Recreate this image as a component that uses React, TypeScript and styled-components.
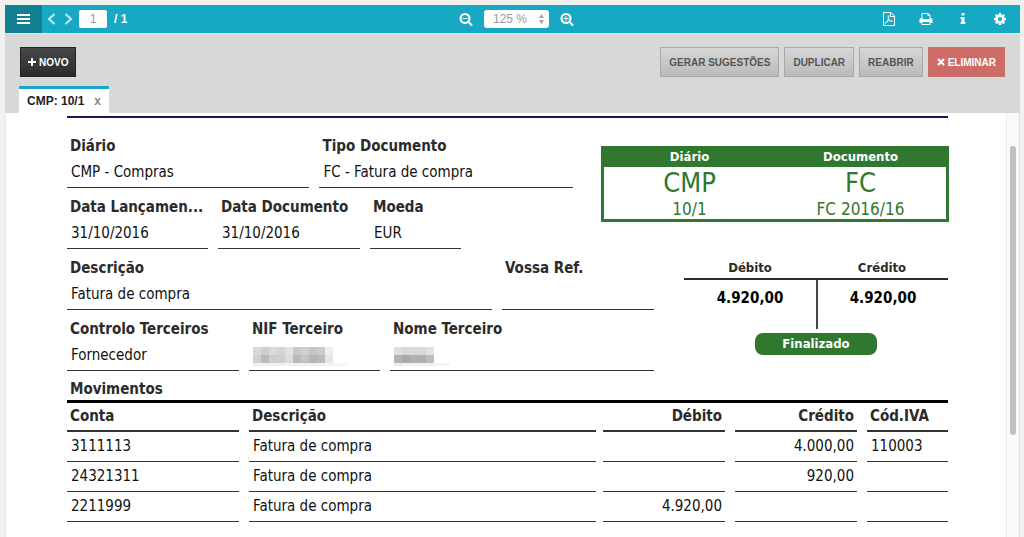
import React from "react";
import styled, { createGlobalStyle, css } from "styled-components";

const TEAL = "#17a9c4";
const GREEN = "#307730";
const UI = `"Liberation Sans", Arial, sans-serif`;
const DOC = `"DejaVu Sans Condensed", "DejaVu Sans", sans-serif`;

const Global = createGlobalStyle`
  *, *::before, *::after { box-sizing: border-box; }
  body { margin: 0; background: #f1f1ee; font-family: ${UI}; }
  button, input, select { font-family: inherit; }
  dl, dd, dt, h2, p { margin: 0; }
`;

const Shell = styled.div`
  display: flex;
  flex-direction: column;
  min-height: 100vh;
  padding: 5px 4px 0 5px;
`;

/* ---------- toolbar ---------- */

const Toolbar = styled.header`
  display: flex;
  align-items: stretch;
  height: 28px;
  background: ${TEAL};
  color: #fff;
`;

const ToolSide = styled.div<{ $end?: boolean }>`
  flex: 1;
  display: flex;
  align-items: center;
  justify-content: ${(p) => (p.$end ? "flex-end" : "flex-start")};
  gap: ${(p) => (p.$end ? 17 : 1)}px;
  padding-right: ${(p) => (p.$end ? 10 : 0)}px;
`;

const ZoomGroup = styled.div`
  display: flex;
  align-items: center;
  gap: 8px;
  padding-left: 18px;
`;

const IconButton = styled.button<{ $w?: number }>`
  display: flex;
  align-items: center;
  justify-content: center;
  width: ${(p) => p.$w ?? 20}px;
  height: 28px;
  padding: 0;
  border: 0;
  background: none;
  color: inherit;
`;

const MenuButton = styled(IconButton)`
  background: #137f93;
`;

const PageInput = styled.input`
  width: 28px;
  height: 18px;
  margin: 0 6px 0 2px;
  padding: 0;
  border: 0;
  border-radius: 2px;
  background: #fff;
  color: #999;
  font-size: 12px;
  text-align: center;
`;

const PageCount = styled.span`
  font-size: 12px;
  font-weight: bold;
`;

const SelectWrap = styled.label`
  display: flex;
  align-items: center;
  width: 65px;
  height: 18px;
  padding-right: 4px;
  border-radius: 3px;
  background: #fff;
  color: #a3a3a3;
`;

const ZoomSelect = styled.select`
  flex: 1;
  min-width: 0;
  appearance: none;
  padding: 0 0 0 9px;
  border: 0;
  background: none;
  color: #999;
  font-size: 12px;
`;

/* ---------- action bar ---------- */

const ActionArea = styled.div`
  display: flex;
  flex-direction: column;
  justify-content: space-between;
  height: 80px;
  padding: 13px 15px 0;
  background: #d8d8d8;
  border-top: 1px solid #e4e4e2;
`;

const ActionRow = styled.div`
  display: flex;
  justify-content: space-between;
`;

const ButtonGroup = styled.div`
  display: flex;
  gap: 5px;
`;

const tones = {
  dark: css`
    padding: 0 7px;
    border-color: #222;
    background: linear-gradient(#484848, #2b2b2b);
    color: #fff;
  `,
  plain: css`
    border-color: #a9a9a9;
    background: linear-gradient(#d6d6d6, #bababa);
    color: #555;
  `,
  danger: css`
    border-color: #c9716b;
    background: #cd6c67;
    color: #fff;
  `,
};

const ActionButton = styled.button<{ $tone: keyof typeof tones }>`
  display: flex;
  align-items: center;
  justify-content: center;
  gap: 3px;
  height: 30px;
  padding: 0 8px;
  border: 1px solid;
  font-size: 10px;
  font-weight: bold;
  white-space: nowrap;
  ${(p) => tones[p.$tone]}
`;

const Tab = styled.div`
  align-self: flex-start;
  display: flex;
  align-items: center;
  gap: 10px;
  height: 27px;
  margin-left: -1px;
  padding: 0 8px;
  border-top: 3px solid ${TEAL};
  background: #fff;
  color: #222;
  font-size: 12px;
  font-weight: bold;
`;

const CloseTab = styled.button`
  padding: 0;
  border: 0;
  background: none;
  color: #888;
  font-size: 12px;
  font-weight: bold;
  line-height: 16px;
`;

/* ---------- document ---------- */

const Viewport = styled.div`
  flex: 1;
  display: flex;
  border-left: 1px solid #e6e6e6;
  background: #fff;
`;

const Sheet = styled.main`
  flex: 1;
  min-width: 0;
  padding: 3px 58px 0 61px;
  font-family: ${DOC};
  font-size: 15px;
  color: #111;
`;

const TopRule = styled.div`
  height: 2px;
  margin-bottom: 9px;
  background: #17175f;
`;

const Split = styled.section<{ $cols: string; $gap: number }>`
  display: grid;
  grid-template-columns: ${(p) => p.$cols};
  column-gap: ${(p) => p.$gap}px;
`;

const FieldRow = styled.dl<{ $cols: string }>`
  display: grid;
  grid-template-columns: ${(p) => p.$cols};
  column-gap: 10px;
`;

const Field = styled.div`
  min-width: 0;
  height: 61px;
  padding: 6px 0 2px;
  border-bottom: 1px solid #333;
`;

const Label = styled.dt`
  overflow: hidden;
  padding-left: 3px;
  color: #2b2b2b;
  font-weight: bold;
  line-height: 26px;
  text-overflow: ellipsis;
  white-space: nowrap;
`;

const Value = styled.dd`
  height: 26px;
  padding-left: 4px;
  line-height: 26px;
  white-space: nowrap;
`;

const Masked = styled.svg`
  display: block;
  padding-top: 5px;
`;

const Stamp = styled.div`
  display: grid;
  grid-template-columns: 1fr 1fr;
  align-self: start;
  height: 76px;
  margin: 19px -1px 0 0;
  border: 3px solid ${GREEN};
  border-top: 0;
  color: ${GREEN};
  text-align: center;
`;

const StampTitle = styled.h2`
  height: 21px;
  background: ${GREEN};
  color: #fff;
  font-size: 13px;
  line-height: 22px;
`;

const StampCode = styled.p`
  font-size: 27px;
  line-height: 32px;
`;

const StampNumber = styled.p`
  font-size: 17px;
  line-height: 20px;
`;

const Balance = styled.div`
  display: flex;
  flex-direction: column;
  align-items: center;
  padding-top: 9px;
`;

const BalanceSides = styled.div`
  display: grid;
  grid-template-columns: 1fr 1fr;
  width: 100%;
`;

const Side = styled.div`
  text-align: center;
  font-weight: bold;
`;

const SideTitle = styled.h2`
  height: 22px;
  border-bottom: 2px solid #2b2b2b;
  color: #2b2b2b;
  font-size: 13px;
  line-height: 20px;
`;

const SideAmount = styled.p<{ $divider?: boolean }>`
  height: 49px;
  border-left: ${(p) => (p.$divider ? "2px solid #444" : "0")};
  color: #000;
  line-height: 36px;
`;

const Status = styled.span`
  width: 122px;
  height: 22px;
  margin-top: 4px;
  border-radius: 8px;
  background: ${GREEN};
  color: #fff;
  font-size: 13px;
  font-weight: bold;
  line-height: 22px;
  text-align: center;
`;

const Movements = styled.table`
  width: 100%;
  table-layout: fixed;
  border-spacing: 0;

  caption {
    height: 32px;
    padding-left: 3px;
    border-bottom: 3px solid #000;
    color: #2b2b2b;
    font-weight: bold;
    line-height: 36px;
    text-align: left;
  }
  th, td { padding: 0 10px 0 0; font-weight: normal; }
  th:nth-child(2), td:nth-child(2) { padding-right: 7px; }
  th:last-child, td:last-child { padding-right: 0; }
`;

const Cell = styled.div<{ $head?: boolean; $right?: boolean }>`
  height: ${(p) => (p.$head ? 29 : 30)}px;
  padding: ${(p) => (p.$head ? "0 3px" : "0 3px 0 4px")};
  border-bottom: ${(p) => (p.$head ? 2 : 1)}px solid #333;
  color: ${(p) => (p.$head ? "#2b2b2b" : "#111")};
  font-weight: ${(p) => (p.$head ? "bold" : "normal")};
  line-height: ${(p) => (p.$head ? 26 : 28)}px;
  text-align: ${(p) => (p.$right ? "right" : "left")};
  white-space: nowrap;
`;

const Track = styled.div`
  display: flex;
  flex-direction: column;
  width: 14px;
  padding: 33px 3px 0;
  border-left: 1px solid #ececec;
  border-right: 1px solid #ddd;
  background: #fafafa;
`;

const Thumb = styled.div`
  height: 74%;
  border-radius: 4px;
  background: #c1c1c1;
`;

/* ---------- icons ---------- */

const RING =
  "M1216 832q0-185-131.500-316.500t-316.500-131.500-316.500 131.500-131.500 316.500 131.500 316.500 316.500 131.500 316.500-131.500 131.500-316.500zm512 832q0 53-37.500 90.500t-90.500 37.500q-54 0-90-38l-343-342q-179 124-399 124-143 0-273.500-55.500t-225-150-150-225-55.500-273.500 55.500-273.500 150-225 225-150 273.500-55.500 273.500 55.500 225 150 150 225 55.500 273.500q0 220-124 399l343 343q37 37 37 90z";

const glyphs = {
  minus: RING + "M448 768h640v128h-640z",
  plus: RING + "M448 768h256v-256h128v256h256v128h-256v256h-128v-256h-256z",
  print:
    "M448 1536h896v-256h-896v256zm0-640h896v-384h-160q-40 0-68-28t-28-68v-160h-640v640zm1152 64q0-26-19-45t-45-19-45 19-19 45 19 45 45 19 45-19 19-45zm128 0v416q0 13-9.500 22.500t-22.500 9.500h-224v160q0 40-28 68t-68 28h-960q-40 0-68-28t-28-68v-160h-224q-13 0-22.500-9.500t-9.500-22.500v-416q0-79 56.500-135.500t135.500-56.500h64v-544q0-40 28-68t68-28h672q40 0 88 20t76 48l152 152q28 28 48 76t20 88v256h64q79 0 135.500 56.500t56.500 135.500z",
  info:
    "M1216 1344v128q0 26-19 45t-45 19h-512q-26 0-45-19t-19-45v-128q0-26 19-45t45-19h64v-384h-64q-26 0-45-19t-19-45v-128q0-26 19-45t45-19h384q26 0 45 19t19 45v576h64q26 0 45 19t19 45zm-128-1152v192q0 26-19 45t-45 19h-256q-26 0-45-19t-19-45v-192q0-26 19-45t45-19h256q26 0 45 19t19 45z",
  cog:
    "M1152 896q0-106-75-181t-181-75-181 75-75 181 75 181 181 75 181-75 75-181zm512-109v222q0 12-8 23t-20 13l-185 28q-19 54-39 91 35 50 107 138 10 12 10 25t-9 23q-27 37-99 108t-94 71q-12 0-26-9l-138-108q-44 23-91 38-16 136-29 186-7 28-36 28h-222q-14 0-24.500-8.500t-11.500-21.500l-28-184q-49-16-90-37l-141 107q-10 9-25 9-14 0-25-11-126-114-165-168-7-10-7-23 0-12 8-23 15-21 51-66.500t54-70.500q-27-50-41-99l-183-27q-13-2-21-12.500t-8-23.500v-222q0-12 8-23t19-13l186-28q14-46 39-92-40-57-107-138-10-12-10-24 0-10 9-23 26-36 98.500-107.500t94.500-71.500q13 0 26 10l138 107q44-23 91-38 16-136 29-186 7-28 36-28h222q14 0 24.500 8.500t11.500 21.500l28 184q49 16 90 37l142-107q9-9 24-9 13 0 25 10 129 119 165 170 7 8 7 22 0 12-8 23-15 21-51 66.500t-54 70.500q26 50 41 98l183 28q13 2 21 12.500t8 23.500z",
};

const Glyph = ({ name }: { name: keyof typeof glyphs }) => (
  <svg width="14" height="14" viewBox="0 0 1792 1792" fill="currentColor" fillRule="evenodd" aria-hidden="true">
    <path d={glyphs[name]} />
  </svg>
);

const Chevron = ({ right }: { right?: boolean }) => (
  <svg width="9" height="12" viewBox="0 0 9 12" fill="none" stroke="#b9eaf2" strokeWidth="2.200" aria-hidden="true">
    <path d={right ? "M1.500 1 7 6l-5.500 5" : "M7.500 1 2 6l5.500 5"} />
  </svg>
);

const Bars = () => (
  <svg width="13" height="10" viewBox="0 0 13 10" fill="#fff" aria-hidden="true">
    <path d="M0 0h13v2H0zM0 4h13v2H0zM0 8h13v2H0z" />
  </svg>
);

const Pdf = () => (
  <svg width="12" height="14" viewBox="0 0 12 14" fill="none" stroke="#fff" aria-hidden="true">
    <path d="M.5.5h7.500l3.500 3.500v9.500H.5zM7.500.5v4h4" />
    <path d="M5.300 3.500c.9 0 .2 3-.7 5-.8 1.900-1.700 3-2.200 2.700-.6-.5 1.700-2 3.600-2.400 2-.4 3.600-.2 3.500.3-.1.700-2 .1-3-1.100C5.500 6.800 4.700 3.500 5.300 3.500z" strokeWidth=".8" />
  </svg>
);

const Arrows = () => (
  <svg width="7" height="12" viewBox="0 0 7 12" fill="currentColor" aria-hidden="true">
    <path d="M3.500 1 6 5H1zM3.500 11 1 7h5z" />
  </svg>
);

const Plus = () => (
  <svg width="8" height="8" viewBox="0 0 8 8" stroke="currentColor" strokeWidth="2" aria-hidden="true">
    <path d="M4 0v8M0 4h8" />
  </svg>
);

const Cross = () => (
  <svg width="8" height="8" viewBox="0 0 8 8" stroke="currentColor" strokeWidth="2" aria-hidden="true">
    <path d="m1 1 6 6M7 1 1 7" />
  </svg>
);

/* Pixelated strips that hide personal data */
const Mosaic = ({ rows, width }: { rows: string[][]; width: number }) => (
  <Masked width={width} height="26" role="img" aria-label="Dados ocultos">
    {rows.map((row, y) =>
      row.map((fill, x) => (
        <rect key={`${x}-${y}`} x={x * 8} y={y * 8} width="8" height={y === 2 ? 3 : 8} fill={fill} />
      ))
    )}
  </Masked>
);

const nifMask = [
  ["#d8d8d8", "#cfcfcf", "#dadada", "#d4d4d4", "#e2e2e2", "#c9c9c9", "#cfcfcf", "#c5c5c5", "#cacaca", "#eee"],
  ["#d0d0d0", "#b9b9b9", "#cdcdcd", "#cfcfcf", "#dcdcdc", "#b9b9b9", "#c4c4c4", "#b6b6b6", "#bbb", "#e6e6e6"],
  ["#efefef", "#f1f1f1", "#f1f1f1", "#f1f1f1", "#f3f3f3", "#f1f1f1", "#f1f1f1", "#f1f1f1", "#f1f1f1", "#f3f3f3", "#f5f5f5", "#f7f7f7"],
];

const nameMask = [
  ["#dedede", "#d8d8d8", "#d8d8d8", "#d8d8d8", "#e2e2e2"],
  ["#b4b4b4", "#a9a9a9", "#b0b0b0", "#afafaf", "#bebebe"],
  ["#ebebeb", "#f3f3f3", "#f1f1f1", "#f1f1f1", "#efefef", "#f3f3f3", "#f5f5f5"],
];

/* ---------- data ---------- */

const movements = [
  ["3111113", "Fatura de compra", "", "4.000,00", "110003"],
  ["24321311", "Fatura de compra", "", "920,00", ""],
  ["2211999", "Fatura de compra", "4.920,00", "", ""],
];
const headings = ["Conta", "Descrição", "Débito", "Crédito", "Cód.IVA"];
const widths = [182, 354, 132, 132, 81];
const isAmount = (i: number) => i === 2 || i === 3;

const Col = styled.col<{ $w: number }>`
  width: ${(p) => (p.$w * 100) / 881}%;
`;

const Entry = ({ label, children }: { label: string; children?: React.ReactNode }) => (
  <Field>
    <Label>{label}</Label>
    <Value>{children}</Value>
  </Field>
);

export default function App() {
  return (
    <Shell>
      <Global />
      <Toolbar>
        <ToolSide>
          <MenuButton $w={37} aria-label="Menu"><Bars /></MenuButton>
          <IconButton $w={16} aria-label="Anterior"><Chevron /></IconButton>
          <IconButton $w={16} aria-label="Seguinte"><Chevron right /></IconButton>
          <PageInput aria-label="Página" defaultValue="1" />
          <PageCount>/ 1</PageCount>
        </ToolSide>
        <ZoomGroup>
          <IconButton aria-label="Reduzir"><Glyph name="minus" /></IconButton>
          <SelectWrap>
            <ZoomSelect aria-label="Zoom" defaultValue="125">
              <option value="125">125 %</option>
            </ZoomSelect>
            <Arrows />
          </SelectWrap>
          <IconButton aria-label="Ampliar"><Glyph name="plus" /></IconButton>
        </ZoomGroup>
        <ToolSide $end>
          <IconButton aria-label="PDF"><Pdf /></IconButton>
          <IconButton aria-label="Imprimir"><Glyph name="print" /></IconButton>
          <IconButton aria-label="Informação"><Glyph name="info" /></IconButton>
          <IconButton aria-label="Definições"><Glyph name="cog" /></IconButton>
        </ToolSide>
      </Toolbar>

      <ActionArea>
        <ActionRow>
          <ActionButton $tone="dark"><Plus />NOVO</ActionButton>
          <ButtonGroup>
            <ActionButton $tone="plain">GERAR SUGESTÕES</ActionButton>
            <ActionButton $tone="plain">DUPLICAR</ActionButton>
            <ActionButton $tone="plain">REABRIR</ActionButton>
            <ActionButton $tone="danger"><Cross />ELIMINAR</ActionButton>
          </ButtonGroup>
        </ActionRow>
        <Tab>
          CMP: 10/1
          <CloseTab aria-label="Fechar">x</CloseTab>
        </Tab>
      </ActionArea>

      <Viewport>
        <Sheet>
          <TopRule />
          <Split $cols="506fr 347fr" $gap={28}>
            <div>
              <FieldRow $cols="242fr 253fr">
                <Entry label="Diário">CMP - Compras</Entry>
                <Entry label="Tipo Documento">FC - Fatura de compra</Entry>
              </FieldRow>
              <FieldRow $cols="141fr 142fr 91fr 102fr">
                <Entry label="Data Lançamen...">31/10/2016</Entry>
                <Entry label="Data Documento">31/10/2016</Entry>
                <Entry label="Moeda">EUR</Entry>
              </FieldRow>
            </div>
            <Stamp>
              <div>
                <StampTitle>Diário</StampTitle>
                <StampCode>CMP</StampCode>
                <StampNumber>10/1</StampNumber>
              </div>
              <div>
                <StampTitle>Documento</StampTitle>
                <StampCode>FC</StampCode>
                <StampNumber>FC 2016/16</StampNumber>
              </div>
            </Stamp>
          </Split>
          <Split $cols="587fr 264fr" $gap={30}>
            <div>
              <FieldRow $cols="425fr 152fr">
                <Entry label="Descrição">Fatura de compra</Entry>
                <Entry label="Vossa Ref." />
              </FieldRow>
              <FieldRow $cols="172fr 131fr 264fr">
                <Entry label="Controlo Terceiros">Fornecedor</Entry>
                <Entry label="NIF Terceiro"><Mosaic rows={nifMask} width={96} /></Entry>
                <Entry label="Nome Terceiro"><Mosaic rows={nameMask} width={56} /></Entry>
              </FieldRow>
            </div>
            <Balance>
              <BalanceSides>
                <Side>
                  <SideTitle>Débito</SideTitle>
                  <SideAmount>4.920,00</SideAmount>
                </Side>
                <Side>
                  <SideTitle>Crédito</SideTitle>
                  <SideAmount $divider>4.920,00</SideAmount>
                </Side>
              </BalanceSides>
              <Status>Finalizado</Status>
            </Balance>
          </Split>
          <Movements>
            <caption>Movimentos</caption>
            <colgroup>
              {widths.map((w, i) => <Col key={i} $w={w} />)}
            </colgroup>
            <thead>
              <tr>
                {headings.map((h, i) => (
                  <th key={h} scope="col"><Cell $head $right={isAmount(i)}>{h}</Cell></th>
                ))}
              </tr>
            </thead>
            <tbody>
              {movements.map((row) => (
                <tr key={row[0]}>
                  {row.map((text, i) => (
                    <td key={i}><Cell $right={isAmount(i)}>{text}</Cell></td>
                  ))}
                </tr>
              ))}
            </tbody>
          </Movements>
        </Sheet>
        <Track><Thumb /></Track>
      </Viewport>
    </Shell>
  );
}
